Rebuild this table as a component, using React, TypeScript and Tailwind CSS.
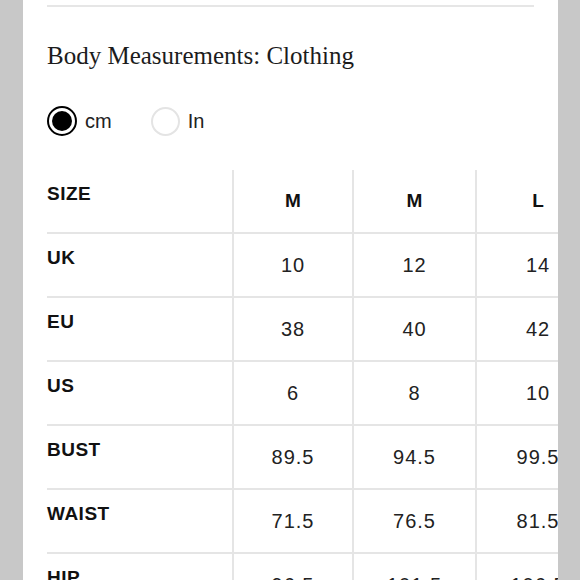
import React from 'react';

type Row = { label: string; values: string[]; head?: boolean };

const rows: Row[] = [
  { label: 'SIZE', values: ['M', 'M', 'L'], head: true },
  { label: 'UK', values: ['10', '12', '14'] },
  { label: 'EU', values: ['38', '40', '42'] },
  { label: 'US', values: ['6', '8', '10'] },
  { label: 'BUST', values: ['89.5', '94.5', '99.5'] },
  { label: 'WAIST', values: ['71.5', '76.5', '81.5'] },
  { label: 'HIP', values: ['96.5', '101.5', '106.5'] },
];

const colWidths = ['w-[120px]', 'w-[123px]', 'w-[124px]'];

const App: React.FC = () => {
  return (
    <div className="flex h-[580px] w-[580px] overflow-hidden bg-[#c8c8c8]">
      <div className="ml-[23px] w-[535px] shrink-0 overflow-hidden bg-white px-6 pt-[5px]">
        {/* divider from the section above */}
        <div className="h-[2px] bg-[#e6e6e6]"></div>

        <h2
          className="mt-[34px] text-[25px] leading-[30px] text-[#1c1c1c]"
          style={{ fontFamily: '"Liberation Serif", serif' }}
        >
          Body Measurements: Clothing
        </h2>

        {/* unit switch */}
        <div
          className="mt-[35px] flex h-[30px] items-center gap-[39px] text-[20px] text-[#222]"
          style={{ fontFamily: '"Liberation Sans", Arial, sans-serif' }}
        >
          <label className="flex items-center gap-2">
            <span className="flex h-[30px] w-[30px] items-center justify-center rounded-full border-2 border-black">
              <span className="h-[20px] w-[20px] rounded-full bg-black"></span>
            </span>
            <span>cm</span>
          </label>
          <label className="flex items-center gap-2">
            <span className="h-[29px] w-[29px] rounded-full border-2 border-[#e4e4e4]"></span>
            <span>In</span>
          </label>
        </div>

        {/* size table */}
        <div
          className="mt-[34px] w-[552px]"
          style={{ fontFamily: '"Liberation Sans", Arial, sans-serif' }}
        >
          {rows.map((row) => (
            <div key={row.label} className="flex h-[64px] border-b-2 border-[#e5e5e5]">
              <div className="w-[185px] shrink-0 pt-3 text-[19px] font-bold leading-[24px] tracking-[0.5px] text-[#111]">
                {row.label}
              </div>
              {row.values.map((v, i) => (
                <div
                  key={i}
                  className={`${colWidths[i]} flex shrink-0 items-center justify-center border-l-2 border-[#e5e5e5] ${
                    row.head
                      ? 'text-[19px] font-bold text-[#111]'
                      : 'text-[20px] tracking-[1px] text-[#222]'
                  }`}
                >
                  {v}
                </div>
              ))}
            </div>
          ))}
        </div>
      </div>
    </div>
  );
};

export default App;
